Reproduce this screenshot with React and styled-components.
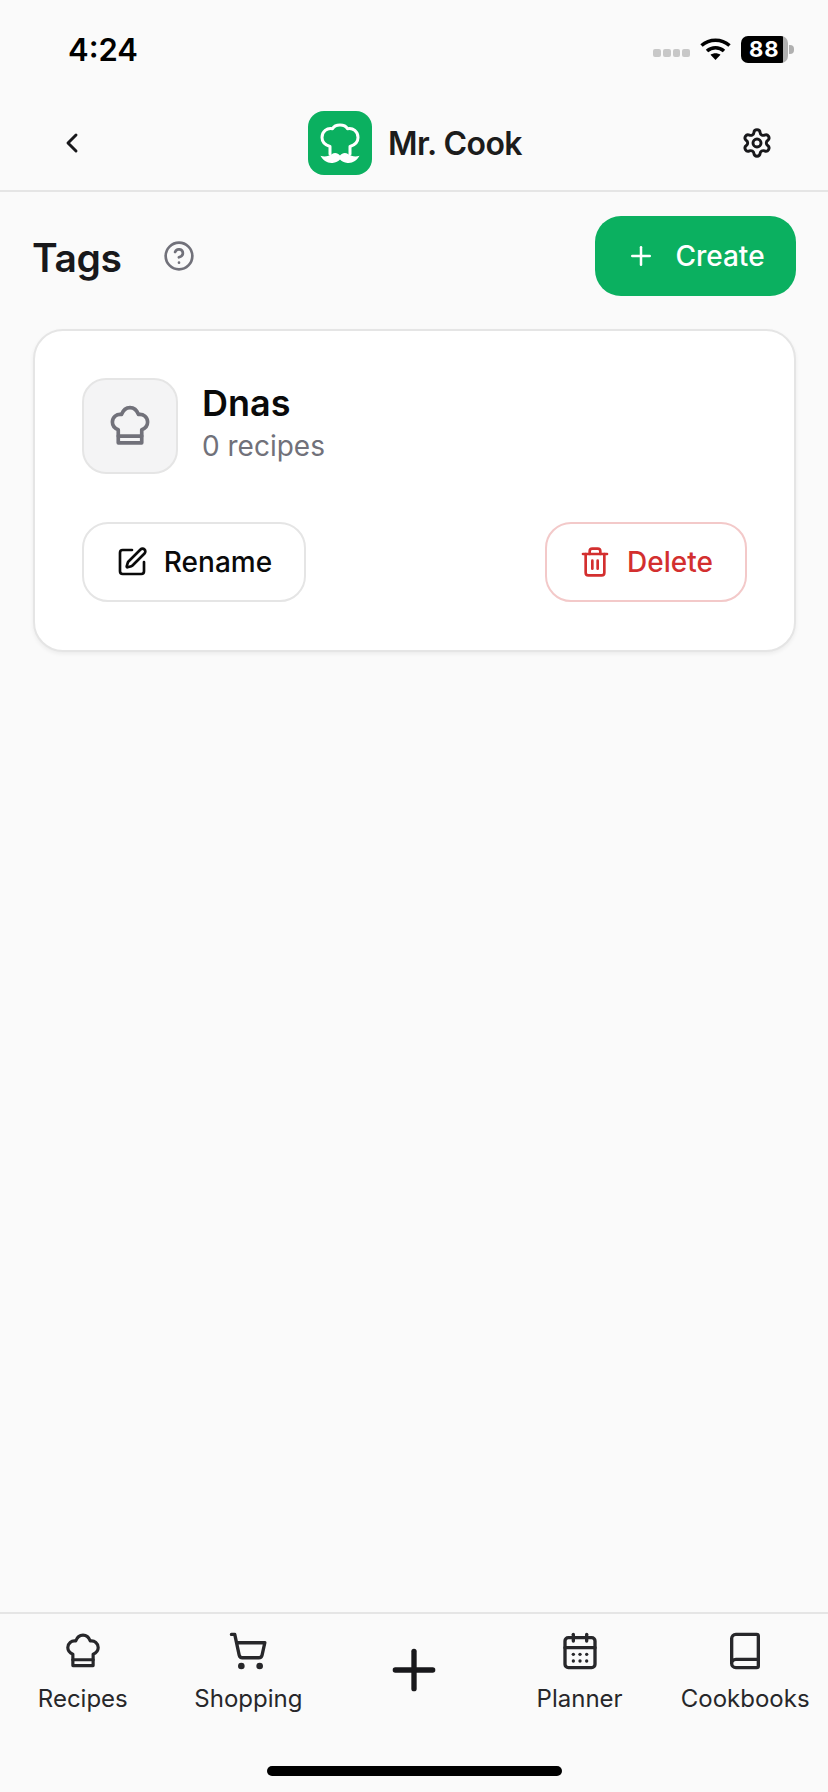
import styled, { createGlobalStyle } from "styled-components";
import {
  ChevronLeft,
  Settings,
  CircleHelp,
  Plus,
  SquarePen,
  Trash2,
  ShoppingCart,
  CalendarDays,
  Book,
} from "lucide-react";

const GlobalStyle = createGlobalStyle`
  html, body { margin: 0; padding: 0; background: #fafafa; }
  * { box-sizing: border-box; }
  body { font-family: Inter, "Liberation Sans", sans-serif; }
`;

const Page = styled.div`
  width: 828px;
  height: 1792px;
  display: flex;
  flex-direction: column;
  background: #fafafa;
  color: #18181b;
  overflow: hidden;
`;

const StatusBar = styled.div`
  height: 98px;
  flex: none;
  display: flex;
  justify-content: space-between;
  align-items: center;
  padding: 0 40px 0 68px;
`;

const Time = styled.span`
  font-size: 31px;
  font-weight: 600;
  color: #000;
`;

const StatusIcons = styled.div`
  display: flex;
  align-items: center;
  gap: 9px;
`;

const SignalDots = styled.div`
  display: flex;
  gap: 2px;
  margin-top: 8px;
`;

const SignalDot = styled.span`
  width: 7.75px;
  height: 8px;
  border-radius: 2px;
  background: #c8c8c8;
`;

const Battery = styled.div`
  width: 47px;
  height: 27px;
  border-radius: 7px;
  background: linear-gradient(to right, #000 89%, #b0b0b0 89%);
  color: #fff;
  font-size: 22px;
  font-weight: 700;
  letter-spacing: 1px;
  line-height: 27px;
  padding-left: 8px;
  position: relative;
  &::after {
    content: "";
    position: absolute;
    right: -6px;
    top: 9px;
    width: 5px;
    height: 9px;
    border-radius: 0 4px 4px 0;
    background: #b0b0b0;
  }
`;

const Header = styled.header`
  height: 94px;
  flex: none;
  display: flex;
  align-items: center;
  justify-content: space-between;
  padding: 0 55px 2px 56px;
  border-bottom: 2px solid #e5e5e5;
`;

const Brand = styled.div`
  display: flex;
  align-items: center;
  gap: 16px;
  margin-left: 1px;
`;

const LogoBox = styled.div`
  width: 64px;
  height: 64px;
  border-radius: 16px;
  background: #0bb060;
  display: flex;
  align-items: center;
  justify-content: center;
`;

const BrandName = styled.span`
  font-size: 32px;
  font-weight: 600;
  letter-spacing: -0.6px;
  color: #1c1c1c;
`;

const Main = styled.main`
  flex: 1;
  padding: 24px 32px 0 33px;
  display: flex;
  flex-direction: column;
  gap: 33px;
`;

const TitleRow = styled.div`
  display: flex;
  align-items: center;
  justify-content: space-between;
`;

const TitleGroup = styled.div`
  display: flex;
  align-items: center;
  gap: 41px;
`;

const Title = styled.h1`
  margin: 2px 0 0 -1px;
  font-size: 39px;
  font-weight: 600;
  letter-spacing: -0.4px;
  color: #18181b;
`;

const CreateButton = styled.button`
  width: 201px;
  height: 80px;
  border: none;
  border-radius: 26px;
  background: #0bb060;
  color: #fff;
  font: 500 28px Inter, sans-serif;
  display: flex;
  align-items: center;
  justify-content: center;
  gap: 19px;
`;

const Card = styled.section`
  height: 323px;
  background: #fff;
  border: 2px solid #e5e5e5;
  border-radius: 30px;
  box-shadow: 0 2px 4px rgba(0, 0, 0, 0.06);
  padding: 47px 47px 0;
  display: flex;
  flex-direction: column;
  gap: 48px;
`;

const TagRow = styled.div`
  display: flex;
  align-items: center;
  gap: 24px;
`;

const TagIcon = styled.div`
  width: 96px;
  height: 96px;
  border: 2px solid #e5e5e5;
  border-radius: 24px;
  background: #f4f4f5;
  color: #71717a;
  display: flex;
  align-items: center;
  justify-content: center;
`;

const TagText = styled.div`
  display: flex;
  flex-direction: column;
  gap: 4px;
  margin-top: -8px;
`;

const TagName = styled.span`
  font-size: 36px;
  line-height: 44px;
  font-weight: 600;
  color: #0a0a0a;
`;

const TagCount = styled.span`
  font-size: 28px;
  line-height: 34px;
  color: #71717a;
`;

const Actions = styled.div`
  display: flex;
  justify-content: space-between;
`;

const ActionButton = styled.button`
  width: ${(p) => (p.$danger ? "202px" : "224px")};
  height: 80px;
  background: #fff;
  border: 2px solid ${(p) => (p.$danger ? "#f3c9c9" : "#e5e5e5")};
  border-radius: 26px;
  color: ${(p) => (p.$danger ? "#d32f2f" : "#0a0a0a")};
  font: 500 28px Inter, sans-serif;
  display: flex;
  align-items: center;
  justify-content: center;
  gap: 16px;
`;

const TabBar = styled.nav`
  height: 180px;
  flex: none;
  border-top: 2px solid #e5e5e5;
  position: relative;
  display: grid;
  grid-template-columns: repeat(5, 1fr);
  padding: 16px 0 0;
  align-items: start;
`;

const Tab = styled.div`
  display: flex;
  flex-direction: column;
  align-items: center;
  gap: 9px;
  color: #27272a;
`;

const TabIcon = styled.div`
  height: 42px;
  display: flex;
  align-items: center;
  justify-content: center;
`;

const TabLabel = styled.span`
  font-size: 24px;
  line-height: 36px;
  color: #27272a;
`;

const AddTab = styled.div`
  display: flex;
  justify-content: center;
  padding-top: 8px;
  color: #18181b;
`;

const HomeBar = styled.div`
  position: absolute;
  left: 267px;
  bottom: 16px;
  width: 295px;
  height: 10px;
  border-radius: 5px;
  background: #000;
`;

function ChefHat({ size, strokeWidth = 2 }) {
  return (
    <svg width={size} height={size} viewBox="0 0 24 24" fill="none" stroke="currentColor" strokeWidth={strokeWidth} strokeLinejoin="round" strokeLinecap="round">
      <path d="M5.6 14C3.5 13.2 2.4 11.6 2.4 9.8c0-2.6 2.3-4.6 5-4.1C8.2 3.5 10 2 12 2s3.8 1.500 4.6 3.7c2.7-.5 5 1.500 5 4.100 0 1.800-1.100 3.400-3.200 4.200v7.200H5.600z" />
      <path d="M5.6 17.5h12.800" />
    </svg>
  );
}

function LogoMark() {
  return (
    <svg width="64" height="64" viewBox="0 0 64 64" fill="none">
      <path d="M22 43V35.5C17 34 14 30.5 14 26.5c0-6 5-10 10.5-8.8C26 15 28.5 14 32 14s6 1 7.5 3.7C45 16.5 50 20.5 50 26.5c0 4-3 7.500-8 9V43" stroke="#fff" strokeWidth="3" strokeLinejoin="round" strokeLinecap="round" />
      <path d="M32 44.5c-2-2.800-5.500-3.300-8-1.500-3 2.100-7 3.200-11.500 1.800C15 49.500 19.500 52.500 24.500 52c3.300-.3 6-1.600 7.500-3.500 1.500 1.900 4.200 3.200 7.500 3.500 5 .5 9.500-2.500 12-7.200-4.500 1.400-8.500.3-11.500-1.800-2.500-1.800-6-1.300-8 1.500z" fill="#fff" />
    </svg>
  );
}

function WifiIcon() {
  return (
    <svg width="33" height="24" viewBox="0 0 32 24" fill="none" stroke="#000" strokeWidth="3.6">
      <path d="M2 8.5c8-7 20-7 28 0" />
      <path d="M7.5 14c5-4.400 12-4.400 17 0" />
      <path d="M16 23l-5-5.300c3-2 7-2 10 0z" fill="#000" stroke="none" />
    </svg>
  );
}

export default function App() {
  return (
    <Page>
      <GlobalStyle />
      <StatusBar>
        <Time>4:24</Time>
        <StatusIcons>
          <SignalDots>
            <SignalDot />
            <SignalDot />
            <SignalDot />
            <SignalDot />
          </SignalDots>
          <WifiIcon />
          <Battery>88</Battery>
        </StatusIcons>
      </StatusBar>
      <Header>
        <ChevronLeft size={32} strokeWidth={2.2} color="#18181b" />
        <Brand>
          <LogoBox>
            <LogoMark />
          </LogoBox>
          <BrandName>Mr. Cook</BrandName>
        </Brand>
        <Settings size={32} strokeWidth={2.2} color="#18181b" />
      </Header>
      <Main>
        <TitleRow>
          <TitleGroup>
            <Title>Tags</Title>
            <CircleHelp size={32} strokeWidth={2} color="#71717a" />
          </TitleGroup>
          <CreateButton>
            <Plus size={30} strokeWidth={2} />
            Create
          </CreateButton>
        </TitleRow>
        <Card>
          <TagRow>
            <TagIcon>
              <ChefHat size={44} />
            </TagIcon>
            <TagText>
              <TagName>Dnas</TagName>
              <TagCount>0 recipes</TagCount>
            </TagText>
          </TagRow>
          <Actions>
            <ActionButton>
              <SquarePen size={32} strokeWidth={2} />
              Rename
            </ActionButton>
            <ActionButton $danger>
              <Trash2 size={32} strokeWidth={2} />
              Delete
            </ActionButton>
          </Actions>
        </Card>
      </Main>
      <TabBar>
        <Tab>
          <TabIcon>
            <ChefHat size={38} />
          </TabIcon>
          <TabLabel>Recipes</TabLabel>
        </Tab>
        <Tab>
          <TabIcon>
            <ShoppingCart size={40} strokeWidth={2} />
          </TabIcon>
          <TabLabel>Shopping</TabLabel>
        </Tab>
        <AddTab>
          <Plus size={64} strokeWidth={2} />
        </AddTab>
        <Tab>
          <TabIcon>
            <CalendarDays size={40} strokeWidth={2} />
          </TabIcon>
          <TabLabel>Planner</TabLabel>
        </Tab>
        <Tab>
          <TabIcon>
            <Book size={40} strokeWidth={2} />
          </TabIcon>
          <TabLabel>Cookbooks</TabLabel>
        </Tab>
        <HomeBar />
      </TabBar>
    </Page>
  );
}
